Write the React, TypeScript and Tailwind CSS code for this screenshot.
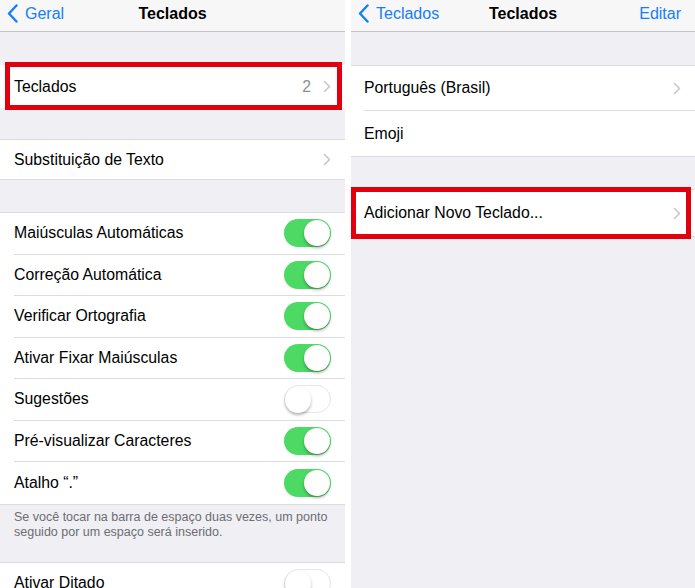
import React from "react";

const font = { fontFamily: '"Liberation Sans", Arial, sans-serif' };

const Chevron = () => (
  <svg width="8" height="13" viewBox="0 0 8 13" className="shrink-0">
    <path d="M1.5 1.5 L6.5 6.5 L1.5 11.5" fill="none" stroke="#c7c7cc" strokeWidth="1.6" strokeLinecap="round" strokeLinejoin="round" />
  </svg>
);

const BackChevron = () => (
  <svg width="11" height="19" viewBox="0 0 11 19" className="shrink-0">
    <path d="M9.5 1.5 L2 9.5 L9.5 17.5" fill="none" stroke="#147efb" strokeWidth="2.4" strokeLinecap="round" strokeLinejoin="round" />
  </svg>
);

const Toggle = ({ on }: { on: boolean }) => (
  <div
    className={`relative w-[47px] h-[28px] rounded-full shrink-0 ${
      on ? "bg-[#4cd964]" : "bg-white border border-[#e5e5ea]"
    }`}
  >
    <div
      className={`absolute top-[1px] w-[26px] h-[26px] rounded-full bg-white shadow-[0_2px_3px_rgba(0,0,0,0.3)] ${
        on ? "right-[1px]" : "left-[0px] top-[0px]"
      }`}
    />
  </div>
);

const NavBar = ({ back, title, right }: { back: string; title: string; right?: string }) => (
  <div className="relative h-[32px] bg-[#f7f7f8] border-b border-[#c4c4c8] flex items-center pb-[4px]">
    <div className="flex items-center gap-[7px] pl-[7px] text-[#147efb] text-[16px]">
      <BackChevron />
      <span>{back}</span>
    </div>
    <div className="absolute inset-0 pb-[4px] flex items-center justify-center text-[16px] font-bold text-black pointer-events-none">
      {title}
    </div>
    {right && <div className="ml-auto pr-[14px] text-[#147efb] text-[16px]">{right}</div>}
  </div>
);

const ToggleRow = ({ label, on, last }: { label: string; on: boolean; last?: boolean }) => (
  <div className="h-[41.5px] pl-[14px]">
    <div className={`h-full flex items-center pr-[14px] ${last ? "" : "border-b border-[#dcdce0]"}`}>
      <span className="text-[15.8px] text-black flex-1">{label}</span>
      <Toggle on={on} />
    </div>
  </div>
);

export default function App() {
  return (
    <div className="w-[695px] h-[588px] bg-white flex overflow-hidden" style={font}>
      {/* Left screen */}
      <div className="w-[345px] h-full bg-[#efeff4] flex flex-col overflow-hidden [&>*]:shrink-0">
        <NavBar back="Geral" title="Teclados" />
        <div className="h-[33px]" />
        <div className="relative h-[43px] bg-white flex items-center pl-[14px] pr-[14px]">
          <span className="text-[15.8px] text-black flex-1">Teclados</span>
          <span className="text-[15.8px] text-[#8e8e93] mr-[12px]">2</span>
          <Chevron />
          <div className="absolute -top-[3px] -bottom-[2px] left-[5px] right-[3px] border-[5px] border-[#e2000f] pointer-events-none" />
        </div>
        <div className="h-[31px]" />
        <div className="h-[41px] bg-white border-y border-[#dcdce0] flex items-center pl-[14px] pr-[14px]">
          <span className="text-[15.8px] text-black flex-1">Substituição de Texto</span>
          <Chevron />
        </div>
        <div className="h-[32px]" />
        <div className="bg-white border-y border-[#dcdce0]">
          <ToggleRow label="Maiúsculas Automáticas" on />
          <ToggleRow label="Correção Automática" on />
          <ToggleRow label="Verificar Ortografia" on />
          <ToggleRow label="Ativar Fixar Maiúsculas" on />
          <ToggleRow label="Sugestões" on={false} />
          <ToggleRow label="Pré-visualizar Caracteres" on />
          <ToggleRow label="Atalho “.”" on last />
        </div>
        <div className="h-[57px] px-[14px] pt-[5px] text-[12.5px] leading-[15px] text-[#6d6d72]">
          Se você tocar na barra de espaço duas vezes, um ponto seguido por um espaço será inserido.
        </div>
        <div className="bg-white border-t border-[#dcdce0]">
          <ToggleRow label="Ativar Ditado" on={false} last />
        </div>
      </div>

      {/* Divider */}
      <div className="w-[6px] h-full bg-white" />

      {/* Right screen */}
      <div className="flex-1 h-full bg-[#efeff4] flex flex-col [&>*]:shrink-0">
        <NavBar back="Teclados" title="Teclados" right="Editar" />
        <div className="h-[33px]" />
        <div className="bg-white border-y border-[#dcdce0]">
          <div className="h-[45px] pl-[13px]">
            <div className="h-full flex items-center pr-[14px] border-b border-[#dcdce0]">
              <span className="text-[15.8px] text-black flex-1">Português (Brasil)</span>
              <Chevron />
            </div>
          </div>
          <div className="h-[45px] pl-[13px] flex items-center">
            <span className="text-[15.8px] text-black">Emoji</span>
          </div>
        </div>
        <div className="h-[32px]" />
        <div className="relative h-[48px] bg-white border-y border-[#dcdce0] flex items-center pl-[13px] pr-[14px]">
          <span className="text-[15.8px] text-black flex-1">Adicionar Novo Teclado...</span>
          <Chevron />
          <div className="absolute -top-[3px] -bottom-[3px] left-[0px] right-[4px] border-[5px] border-[#e2000f] pointer-events-none" />
        </div>
      </div>
    </div>
  );
}
